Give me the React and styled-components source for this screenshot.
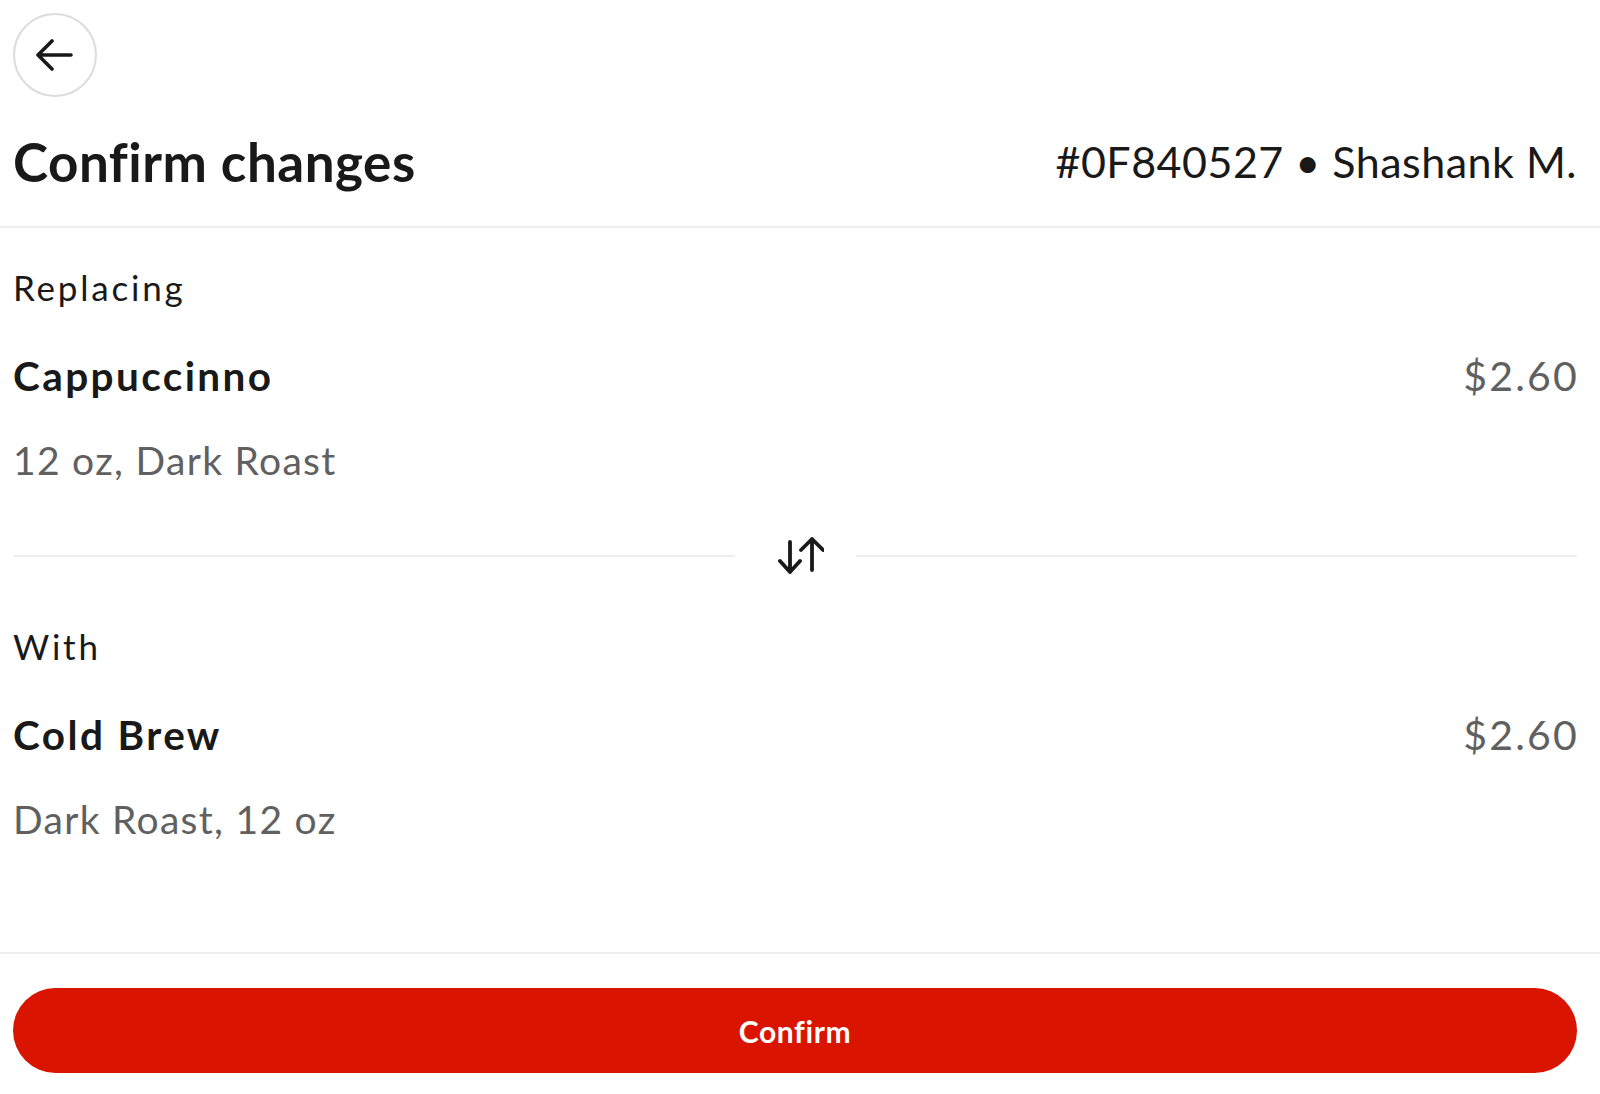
import React from "react";
import styled, { createGlobalStyle } from "styled-components";

const GlobalStyle = createGlobalStyle`
  html, body {
    margin: 0;
    padding: 0;
    background: #ffffff;
    font-family: Lato, "Open Sans", Arial, sans-serif;
    color: #191919;
  }
  * { box-sizing: border-box; }
`;

const Page = styled.div`
  display: flex;
  flex-direction: column;
  height: 1094px;
  background: #ffffff;
`;

const Header = styled.header`
  display: flex;
  flex-direction: column;
  padding: 13px 23px 32px 13px;
  border-bottom: 2px solid #eeeeee;
`;

const BackButton = styled.button`
  width: 84px;
  height: 84px;
  border-radius: 50%;
  border: 2px solid #dcdcdc;
  background: #ffffff;
  display: flex;
  align-items: center;
  justify-content: center;
  padding: 0;
  cursor: pointer;
  color: #191919;
`;

const TitleRow = styled.div`
  display: flex;
  align-items: center;
  justify-content: space-between;
  margin-top: 33px;
  height: 64px;
`;

const Title = styled.h1`
  margin: 0;
  font-size: 53px;
  line-height: 64px;
  font-weight: 700;
  letter-spacing: 0.5px;
  color: #191919;
`;

const OrderInfo = styled.div`
  font-size: 43px;
  line-height: 64px;
  font-weight: 400;
  letter-spacing: 0.5px;
  color: #191919;
`;

const Content = styled.main`
  flex: 1;
  display: flex;
  flex-direction: column;
  padding: 35px 23px 0 13px;
`;

const Section = styled.section`
  display: flex;
  flex-direction: column;
`;

const Label = styled.div`
  font-size: 35px;
  line-height: 48px;
  font-weight: 400;
  letter-spacing: 2.8px;
  color: #191919;
`;

const ItemRow = styled.div`
  display: flex;
  justify-content: space-between;
  align-items: center;
  margin-top: 37px;
  height: 56px;
`;

const ItemName = styled.div`
  font-size: 40.5px;
  line-height: 56px;
  font-weight: 700;
  letter-spacing: 2.4px;
  color: #191919;
`;

const Price = styled.div`
  font-size: 41px;
  line-height: 56px;
  font-weight: 400;
  letter-spacing: 2.2px;
  margin-right: -2px;
  color: #606060;
`;

const Details = styled.div`
  margin-top: 28px;
  font-size: 39px;
  line-height: 56px;
  font-weight: 400;
  letter-spacing: 1.3px;
  color: #606060;
`;

const SwapRow = styled.div`
  display: flex;
  align-items: center;
  height: 40px;
  margin: 48px 0 46px;
`;

const Rule = styled.div`
  flex: 1;
  height: 2px;
  background: #eeeeee;
`;

const SwapIcon = styled.div`
  display: flex;
  align-items: center;
  justify-content: center;
  padding: 0 32px 0 43px;
  color: #191919;
`;

const Footer = styled.footer`
  border-top: 2px solid #eeeeee;
  padding: 34px 23px 21px 13px;
`;

const ConfirmButton = styled.button`
  width: 100%;
  height: 85px;
  border: none;
  border-radius: 43px;
  background: #d91400;
  color: #ffffff;
  font-family: Lato, "Open Sans", Arial, sans-serif;
  font-size: 30px;
  font-weight: 700;
  letter-spacing: 0.6px;
  cursor: pointer;
`;

const ArrowLeft = () => (
  <svg width="38" height="32" viewBox="0 0 38 32" fill="none" stroke="currentColor" strokeWidth="3.6" strokeLinecap="round" strokeLinejoin="round">
    <path d="M2 16 H35 M16 2 L2 16 L16 30" />
  </svg>
);

const SwapArrows = () => (
  <svg width="46" height="40" viewBox="0 0 46 40" fill="none" stroke="currentColor" strokeWidth="3.8" strokeLinecap="round" strokeLinejoin="round">
    <path d="M12 6 V36 M2 25 L12 36 L22 25" />
    <path d="M34 34 V3 M23 14 L34 3 L45 14" />
  </svg>
);

const ItemSection = ({ label, name, price, details }) => (
  <Section>
    <Label>{label}</Label>
    <ItemRow>
      <ItemName>{name}</ItemName>
      <Price>{price}</Price>
    </ItemRow>
    <Details>{details}</Details>
  </Section>
);

export default function App() {
  return (
    <>
      <GlobalStyle />
      <Page>
        <Header>
          <BackButton aria-label="Back">
            <ArrowLeft />
          </BackButton>
          <TitleRow>
            <Title>Confirm changes</Title>
            <OrderInfo>#0F840527 • Shashank M.</OrderInfo>
          </TitleRow>
        </Header>
        <Content>
          <ItemSection label="Replacing" name="Cappuccinno" price="$2.60" details="12 oz, Dark Roast" />
          <SwapRow>
            <Rule />
            <SwapIcon>
              <SwapArrows />
            </SwapIcon>
            <Rule />
          </SwapRow>
          <ItemSection label="With" name="Cold Brew" price="$2.60" details="Dark Roast, 12 oz" />
        </Content>
        <Footer>
          <ConfirmButton>Confirm</ConfirmButton>
        </Footer>
      </Page>
    </>
  );
}
